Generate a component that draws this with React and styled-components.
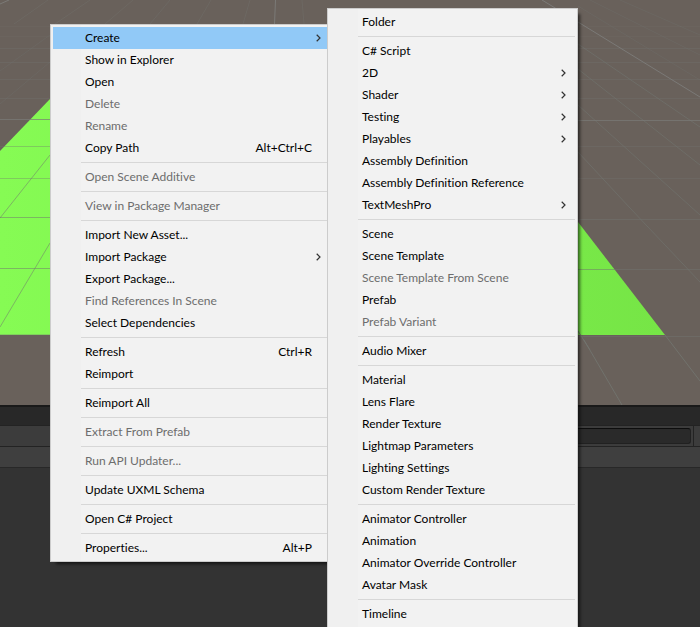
import React from "react";
import styled, { createGlobalStyle, css } from "styled-components";

const GlobalStyle = createGlobalStyle`
  *, *::before, *::after { box-sizing: border-box; }
  body {
    margin: 0;
    background: #333333;
    font-family: "Lato", "Segoe UI", sans-serif;
    font-size: 12px;
    font-variant-ligatures: none;
    overflow: hidden;
  }
`;

const Editor = styled.div`
  position: relative;
  display: flex;
  flex-direction: column;
  height: 100vh;
  overflow: hidden;
`;

const SceneView = styled.svg`
  display: block;
  flex: none;
  width: 100%;
  height: 405px;
  background: #69615b;
`;

const TabStrip = styled.div`
  flex: none;
  height: 21px;
  background: #282828;
  border-top: 2px solid #191919;
  border-bottom: 1px solid #232323;
`;

const Toolbar = styled.div`
  flex: none;
  display: flex;
  align-items: stretch;
  justify-content: flex-end;
  height: 21px;
  background: #3c3c3c;
  border-bottom: 1px solid #232323;
`;

const SearchField = styled.input`
  width: 60%;
  height: 16px;
  margin: 2px 2px 0 0;
  padding: 0 6px;
  color: #d2d2d2;
  font: inherit;
  background: #2a2a2a;
  border: 1px solid #212121;
  border-top-color: #0d0d0d;
  border-radius: 3px;
  outline: none;
`;

const ToolbarButton = styled.button`
  width: 7px;
  padding: 0;
  background: transparent;
  border: 0;
  border-left: 1px solid #232323;
`;

const PathBar = styled.div`
  flex: none;
  height: 21px;
  background: #3f3f3f;
  border-bottom: 1px solid #282828;
`;

const AssetArea = styled.div`
  flex: 1;
  background: #333333;
`;

const menuPlace = {
  main: css`
    left: 50px;
    top: 24px;
    width: 283px;
  `,
  sub: css`
    left: 327px;
    top: 8px;
    width: 251px;
  `,
};

const MenuPanel = styled.div`
  position: absolute;
  ${({ $place }) => menuPlace[$place]}
  padding: 2px;
  background: linear-gradient(to right, #f0f0f0 30px, #f2f2f2 30px);
  border: 1px solid #cccccc;
  box-shadow: 4px 4px 3px -2px rgba(0, 0, 0, 0.6);
`;

const MenuItem = styled.button`
  display: flex;
  align-items: center;
  width: 100%;
  height: 22px;
  padding: 0 9px 0 32px;
  border: 0;
  background: ${({ $active }) => ($active ? "#91c9f7" : "transparent")};
  color: #000000;
  font: inherit;
  font-variant-ligatures: none;
  line-height: 22px;
  text-align: left;
  white-space: nowrap;

  &:disabled { color: #6d6d6d; }
`;

const Label = styled.span`
  flex: 1;
`;

const Shortcut = styled.span`
  margin-right: 9px;
`;

const Chevron = styled.svg`
  width: 5px;
  height: 8px;
  fill: none;
  stroke: #333333;
  stroke-width: 1.2;
`;

const Separator = styled.hr`
  height: 1px;
  margin: 3px 0 3px 28px;
  border: 0;
  background: #d7d7d7;
`;

const SEP = null;

const mainItems = [
  { label: "Create", submenu: true, active: true },
  { label: "Show in Explorer" },
  { label: "Open" },
  { label: "Delete", disabled: true },
  { label: "Rename", disabled: true },
  { label: "Copy Path", shortcut: "Alt+Ctrl+C" },
  SEP,
  { label: "Open Scene Additive", disabled: true },
  SEP,
  { label: "View in Package Manager", disabled: true },
  SEP,
  { label: "Import New Asset..." },
  { label: "Import Package", submenu: true },
  { label: "Export Package..." },
  { label: "Find References In Scene", disabled: true },
  { label: "Select Dependencies" },
  SEP,
  { label: "Refresh", shortcut: "Ctrl+R" },
  { label: "Reimport" },
  SEP,
  { label: "Reimport All" },
  SEP,
  { label: "Extract From Prefab", disabled: true },
  SEP,
  { label: "Run API Updater...", disabled: true },
  SEP,
  { label: "Update UXML Schema" },
  SEP,
  { label: "Open C# Project" },
  SEP,
  { label: "Properties...", shortcut: "Alt+P" },
];

const createItems = [
  { label: "Folder" },
  SEP,
  { label: "C# Script" },
  { label: "2D", submenu: true },
  { label: "Shader", submenu: true },
  { label: "Testing", submenu: true },
  { label: "Playables", submenu: true },
  { label: "Assembly Definition" },
  { label: "Assembly Definition Reference" },
  { label: "TextMeshPro", submenu: true },
  SEP,
  { label: "Scene" },
  { label: "Scene Template" },
  { label: "Scene Template From Scene", disabled: true },
  { label: "Prefab" },
  { label: "Prefab Variant", disabled: true },
  SEP,
  { label: "Audio Mixer" },
  SEP,
  { label: "Material" },
  { label: "Lens Flare" },
  { label: "Render Texture" },
  { label: "Lightmap Parameters" },
  { label: "Lighting Settings" },
  { label: "Custom Render Texture" },
  SEP,
  { label: "Animator Controller" },
  { label: "Animation" },
  { label: "Animator Override Controller" },
  { label: "Avatar Mask" },
  SEP,
  { label: "Timeline" },
];

function Menu({ items, place, name }) {
  return (
    <MenuPanel role="menu" aria-label={name} $place={place}>
      {items.map((item, i) =>
        item === SEP ? (
          <Separator key={i} />
        ) : (
          <MenuItem
            key={item.label}
            type="button"
            role="menuitem"
            disabled={item.disabled}
            aria-haspopup={item.submenu ? "menu" : undefined}
            $active={item.active}
          >
            <Label>{item.label}</Label>
            {item.shortcut && <Shortcut>{item.shortcut}</Shortcut>}
            {item.submenu && (
              <Chevron viewBox="0 0 5 8" aria-hidden="true">
                <path d="M0.7 0.8 L4 4 L0.7 7.2" />
              </Chevron>
            )}
          </MenuItem>
        )
      )}
    </MenuPanel>
  );
}

function Scene() {
  return (
    <SceneView viewBox="0 0 700 405" preserveAspectRatio="xMinYMin slice" aria-hidden="true">
      <defs>
        <linearGradient id="ground" x1="0" x2="1" y1="0" y2="0">
          <stop offset="0" stopColor="#86fb54" />
          <stop offset="1" stopColor="#76e546" />
        </linearGradient>
      </defs>
      <path d="M0 151 L50 99 L300 30 L578 222 L665 335 L0 335Z" fill="url(#ground)" />
      <g stroke="#72746f" strokeOpacity="0.35" fill="none">
        <path d="M0 48.5H700M0 62.5H700M0 79.5H700M0 98.5H700M0 146.5H700M0 178.5H700" />
        <path d="M0 36.5H700M0 26.5H700" strokeOpacity="0.2" />
        <path d="M0 217.5H50M578 219.5H700M0 268.5H50M578 269.5H700M578 336.5H700" strokeOpacity="0.5" />
        <path d="M0 334.5H50M0 104L50 62M0 71L50 35" strokeOpacity="0.3" />
        <path d="M0 218L50 155M0 327L50 243" strokeOpacity="0.5" />
        <path d="M578 44L700 127M578 69L700 165M578 105L700 215M578 152L630 208L700 282" strokeOpacity="0.6" />
        <path d="M578 331L590 350M665 335L700 381M584 340L622 405" strokeOpacity="0.9" />
        <path d="M590 0L700 55M620 0L700 35M578 6L700 80" strokeOpacity="0.3" />
        <path d="M14 24L48 0M55 24L90 0M105 24L133 0M150 24L170 0M197 24L211 0M243 24L250 0M304 24L302 0" strokeOpacity="0.4" />
      </g>
      <g stroke="#7b7a77" fill="none">
        <path d="M0 119.5H50M578 120.5H700" strokeOpacity="0.7" />
        <path d="M542 0L578 22L700 97M275.500 0L274.500 24M0 4L9 0" />
      </g>
    </SceneView>
  );
}

export default function App() {
  return (
    <>
      <GlobalStyle />
      <Editor>
        <Scene />
        <TabStrip />
        <Toolbar>
          <SearchField type="text" aria-label="Search" />
          <ToolbarButton type="button" aria-label="Filter" />
        </Toolbar>
        <PathBar />
        <AssetArea />
        <Menu items={mainItems} place="main" name="Assets" />
        <Menu items={createItems} place="sub" name="Create" />
      </Editor>
    </>
  );
}
